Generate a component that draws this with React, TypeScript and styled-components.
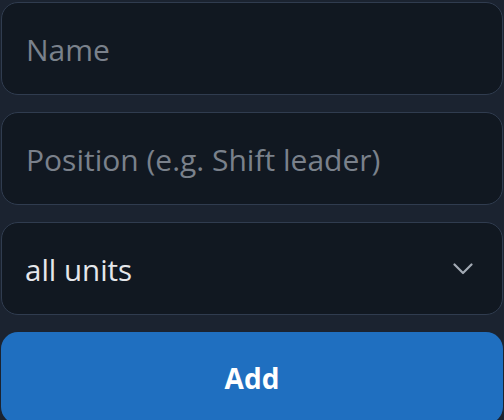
import React from "react";
import styled, { createGlobalStyle } from "styled-components";

const GlobalStyle = createGlobalStyle`
  html, body {
    margin: 0;
    padding: 0;
    background: #1b2330;
  }
  body {
    font-family: "Open Sans", "Noto Sans", sans-serif;
  }
`;

const Form = styled.form`
  display: flex;
  flex-direction: column;
  gap: 17px;
  padding: 2px 1px 0 1px;
`;

const Field = styled.input`
  box-sizing: border-box;
  width: 100%;
  height: 93px;
  padding: 2px 24px 0;
  border: 1.5px solid #303c4f;
  border-radius: 17px;
  background: #111821;
  color: #e5e7eb;
  font-family: inherit;
  font-size: 30px;
  outline: none;

  &::placeholder {
    color: #7a818b;
  }
`;

const SelectWrap = styled.div`
  position: relative;
`;

const Select = styled.select`
  box-sizing: border-box;
  width: 100%;
  height: 93px;
  padding: 2px 60px 0 23px;
  border: 1.5px solid #303c4f;
  border-radius: 17px;
  background: #111821;
  color: #e5e7eb;
  font-family: inherit;
  font-size: 29.5px;
  appearance: none;
  outline: none;
`;

const Chevron = styled.svg`
  position: absolute;
  right: 30px;
  top: 50%;
  transform: translateY(-50%);
  pointer-events: none;
`;

const AddButton = styled.button`
  height: 92px;
  border: none;
  border-radius: 17px;
  background: #1f6fc0;
  color: #ffffff;
  font-family: inherit;
  font-size: 28px;
  font-weight: 700;
  cursor: pointer;
`;

const App = () => {
  return (
    <>
      <GlobalStyle />
      <Form onSubmit={(e) => e.preventDefault()}>
        <Field placeholder="Name" />
        <Field placeholder="Position (e.g. Shift leader)" />
        <SelectWrap>
          <Select defaultValue="all">
            <option value="all">all units</option>
          </Select>
          <Chevron width="20" height="12" viewBox="0 0 20 12" fill="none">
            <path
              d="M1.5 1.5 L10 10 L18.5 1.5"
              stroke="#a3aab4"
              strokeWidth="2.2"
              strokeLinecap="round"
              strokeLinejoin="round"
            />
          </Chevron>
        </SelectWrap>
        <AddButton type="submit">Add</AddButton>
      </Form>
    </>
  );
};

export default App;
